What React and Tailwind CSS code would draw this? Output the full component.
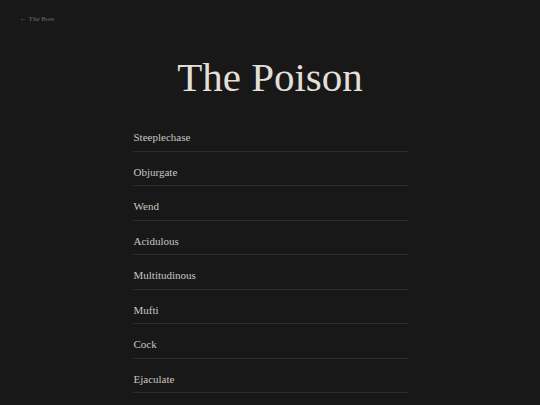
const items = [
  "Steeplechase",
  "Objurgate",
  "Wend",
  "Acidulous",
  "Multitudinous",
  "Mufti",
  "Cock",
  "Ejaculate",
];

export default function App() {
  return (
    <div
      className="min-h-screen bg-[#181818] text-[#c9c6c0]"
      style={{ fontFamily: '"Liberation Serif", "Times New Roman", serif' }}
    >
      <div className="px-5 pt-[14px]">
        <a className="block text-[7px] leading-[10px] text-[#6f6f6f]">← The Bow</a>
      </div>

      <h1 className="mt-[30px] text-center text-[41px] leading-[46px] text-[#e2dfd8]">
        The Poison
      </h1>

      <ul className="mx-auto mt-[17px] w-[275px]">
        {items.map((word) => (
          <li
            key={word}
            className="border-b border-[#2c2c2c] pl-[1px] pt-3 pb-[5.5px] text-[11px] leading-4"
          >
            {word}
          </li>
        ))}
      </ul>
    </div>
  );
}
